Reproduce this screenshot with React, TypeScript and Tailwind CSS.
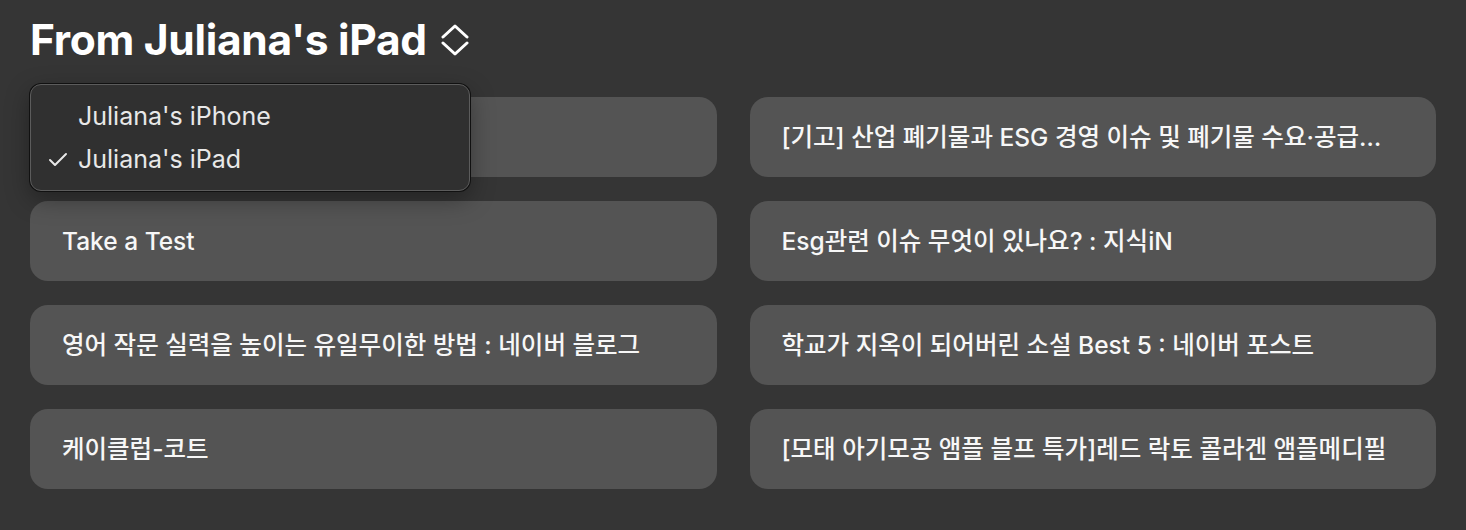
import { Check } from 'lucide-react'

const font = { fontFamily: 'Inter, "Noto Sans CJK KR", sans-serif' }

const tabs = [
  '',
  '[기고] 산업 폐기물과 ESG 경영 이슈 및 폐기물 수요·공급…',
  'Take a Test',
  'Esg관련 이슈 무엇이 있나요? : 지식iN',
  '영어 작문 실력을 높이는 유일무이한 방법 : 네이버 블로그',
  '학교가 지옥이 되어버린 소설 Best 5 : 네이버 포스트',
  '케이클럽-코트',
  '[모태 아기모공 앰플 블프 특가]레드 락토 콜라겐 앰플메디필',
]

function UpDown() {
  return (
    <svg width="28" height="32" viewBox="0 0 28 32" fill="none" stroke="white" strokeWidth="3" strokeLinecap="round" strokeLinejoin="round">
      <path d="M2 13 L14 2 L26 13" />
      <path d="M2 19 L14 30 L26 19" />
    </svg>
  )
}

export default function App() {
  return (
    <div className="min-h-screen w-full bg-[#353535] text-white" style={font}>
      <div className="relative px-[30px] pt-[17px]">
        <div className="flex items-center gap-[14px] h-[46px]">
          <h1 className="text-[42.5px] font-bold leading-none tracking-[-0.3px]">From Juliana's iPad</h1>
          <UpDown />
        </div>

        <div className="grid grid-cols-2 gap-x-[33px] gap-y-[24px] mt-[34px]">
          {tabs.map((t, i) => (
            <div key={i} className="h-[80px] rounded-[18px] bg-[#545454] flex items-center px-[32px] min-w-0">
              <span className="whitespace-nowrap overflow-hidden text-[24.5px] font-medium text-[#f7f7f7]">{t}</span>
            </div>
          ))}
        </div>

        {/* device menu */}
        <div className="absolute left-[30px] top-[84px] w-[440px] h-[107px] rounded-[11px] bg-[#303030] border border-[#5c5c5c] shadow-[0_0_0_1px_#111,0_8px_24px_rgba(0,0,0,0.35)] py-[10px]">
          <div className="h-[43px] flex items-center pl-[47px] text-[25px] text-[#e8e8e8]">Juliana's iPhone</div>
          <div className="h-[43px] flex items-center text-[25px] text-[#e8e8e8]">
            <span className="w-[47px] flex justify-end pr-[8px]">
              <Check size={24} strokeWidth={2} />
            </span>
            Juliana's iPad
          </div>
        </div>
      </div>
    </div>
  )
}
